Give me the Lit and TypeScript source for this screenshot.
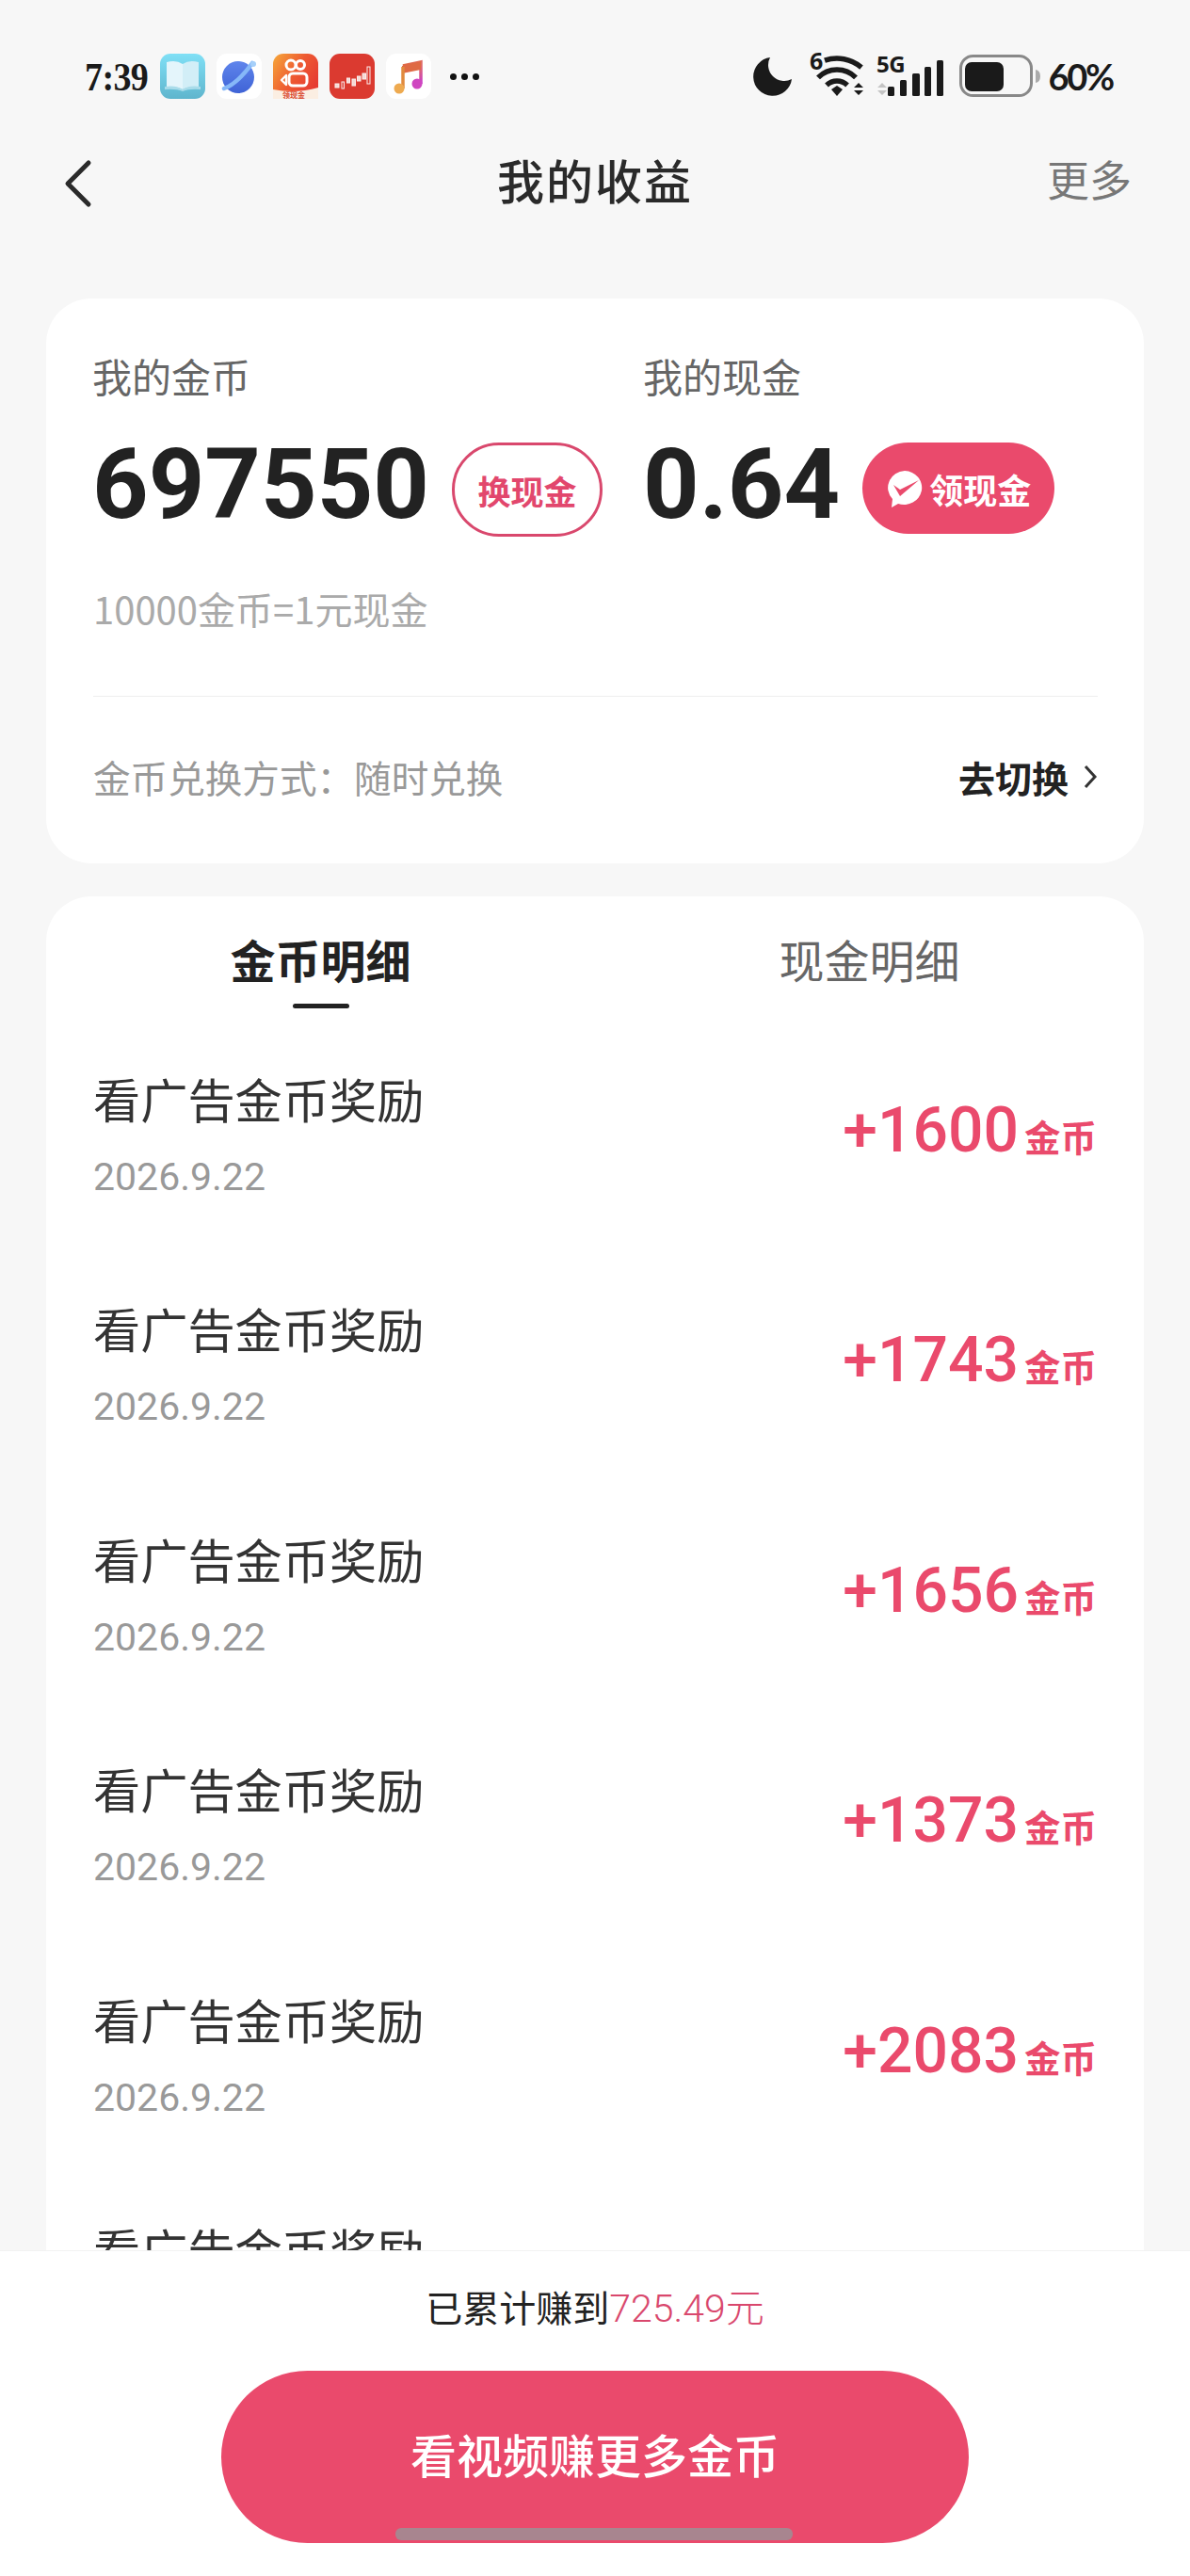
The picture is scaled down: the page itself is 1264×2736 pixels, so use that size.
import { LitElement, html, css, svg } from "lit";
import { customElement } from "lit/decorators.js";

const rows = ["+1600", "+1743", "+1656", "+1373", "+2083", "+1500"];

@customElement("app-root")
export class AppRoot extends LitElement {
  static styles = css`
    :host {
      display: block;
      position: relative;
      width: 1264px;
      height: 2736px;
      overflow: hidden;
      background: #f7f7f7;
      font-family: "Noto Sans CJK SC", "Noto Sans", sans-serif;
      color: #222;
    }
    .status {
      height: 140px;
      box-sizing: border-box;
      padding: 57px 82px 0 90px;
      display: flex;
      justify-content: space-between;
      align-items: flex-start;
    }
    .left, .right { display: flex; align-items: center; height: 48px; }
    .time {
      font: 700 38px/48px "Liberation Serif", serif;
      color: #1a1a1a;
      width: 80px;
      letter-spacing: -0.6px;
      transform: scaleY(1.12);
    }
    .apps { display: flex; gap: 12px; }
    .app { width: 48px; height: 48px; display: block; }
    .dots { display: flex; gap: 5px; margin-left: 20px; }
    .dots i { width: 7px; height: 7px; border-radius: 50%; background: #111; }
    .moon { width: 42px; height: 42px; margin-right: 16px; }
    .wifi { width: 60px; height: 56px; margin: -10px 11px 0 2px; }
    .signal { width: 74px; height: 56px; margin: -10px 14px 0 0; }
    .battery { width: 88px; height: 46px; margin-right: 6px; }
    .pct {
      font: 700 38px/48px "Lato", sans-serif;
      letter-spacing: -2.2px;
      color: #1a1a1a;
    }
    .nav {
      height: 100px;
      display: grid;
      grid-template-columns: 1fr auto 1fr;
      align-items: center;
      padding: 0 62px 0 66px;
      margin-bottom: 77px;
    }
    .back { width: 32px; height: 52px; display: block; margin-top: 10px; }
    .title { font-size: 50px; line-height: 60px; font-weight: 500; letter-spacing: 2px; color: #2a2a2a; margin-right: 4px; }
    .more { justify-self: end; font-size: 45px; line-height: 60px; color: #777; }
    .card {
      margin: 0 49px;
      background: #fff;
      border-radius: 48px;
    }
    .summary {
      height: 600px;
      box-sizing: border-box;
      padding: 57px 49px 0 50px;
      margin-bottom: 35px;
    }
    .cols { display: grid; grid-template-columns: 585px 1fr; }
    .label { font-size: 42px; line-height: 50px; color: #666; margin-left: -1px; }
    .value-row { display: flex; align-items: center; gap: 24px; margin-top: 41px; height: 100px; }
    .value {
      font: 700 104px/100px "Roboto", sans-serif;
      color: #222;
      margin-left: -1px;
    }
    .btn-outline {
      width: 160px;
      height: 100px;
      margin-top: 10px;
      box-sizing: border-box;
      border: 3px solid #d9486d;
      border-radius: 50px;
      color: #e2476d;
      font-size: 35px;
      font-weight: 700;
      display: flex;
      align-items: center;
      justify-content: center;
    }
    .btn-fill {
      width: 204px;
      height: 97px;
      margin-top: 7px;
      border-radius: 49px;
      background: #ea4a6c;
      color: #fff;
      font-size: 36px;
      font-weight: 700;
      display: flex;
      align-items: center;
      justify-content: center;
      gap: 6px;
    }
    .btn-fill svg { width: 40px; height: 40px; display: block; }
    .rate { font-size: 40px; line-height: 50px; color: #aaa; margin-top: 56px; }
    .divider { height: 1px; background: #eee; margin-top: 68px; }
    .mode { display: flex; justify-content: space-between; align-items: center; margin-top: 60px; height: 50px; }
    .mode-text { font-size: 39.6px; line-height: 50px; color: #999; white-space: nowrap; }
    .switch { display: flex; align-items: center; gap: 15px; font-size: 39px; font-weight: 700; color: #222; }
    .switch svg { width: 16px; height: 28px; display: block; }
    .details { height: 1800px; }
    .tabs { display: grid; grid-template-columns: 1fr 1fr; height: 138px; }
    .tab { position: relative; text-align: center; font-size: 48px; line-height: 60px; padding-top: 36px; color: #666; }
    .tab.on { font-weight: 700; color: #222; }
    .tab.on::after {
      content: "";
      position: absolute;
      left: 50%;
      top: 114px;
      width: 60px;
      height: 5px;
      margin-left: -30px;
      border-radius: 3px;
      background: #222;
    }
    .row {
      height: 244.4px;
      box-sizing: border-box;
      padding: 46px 50px 0;
      display: flex;
      justify-content: space-between;
      align-items: flex-start;
    }
    .row-title { font-size: 50.2px; line-height: 60px; color: #333; }
    .row-date { font: 400 41px/50px "Roboto", sans-serif; color: #999; margin-top: 29px; }
    .amount { display: flex; align-items: baseline; color: #ea4a6c; margin-top: 25px; }
    .amount b { font: 500 66px/80px "Roboto", sans-serif; }
    .amount span { font-size: 38.5px; font-weight: 700; margin-left: 6px; line-height: 60px; }
    .bottom {
      position: absolute;
      left: 0;
      right: 0;
      top: 2390px;
      bottom: 0;
      background: #fff;
      border-top: 1px solid #f2f2f2;
      display: flex;
      flex-direction: column;
      align-items: center;
    }
    .total { margin-top: 33px; font-size: 39px; line-height: 50px; color: #222; white-space: nowrap; }
    .total em { font-style: normal; font-size: 41px; color: #d9486d; font-family: "Roboto", "Noto Sans CJK SC", sans-serif; font-weight: 300; }
    .cta {
      width: 794px;
      height: 183px;
      margin-top: 41px;
      box-sizing: border-box;
      padding-bottom: 8px;
      border-radius: 92px;
      background: #ea4a6c;
      color: #fff;
      font-size: 49px;
      font-weight: 500;
      display: flex;
      align-items: center;
      justify-content: center;
    }
    .home {
      position: absolute;
      left: 420px;
      top: 2685px;
      width: 422px;
      height: 13px;
      border-radius: 6px;
      background: #a8858f;
    }
  `;

  private apps() {
    return html`
      <svg class="app" viewBox="0 0 48 48">
        <defs>
          <linearGradient id="bk" x1="0" y1="0" x2="0" y2="1">
            <stop offset="0" stop-color="#80e0f6" /><stop offset="1" stop-color="#5fb5cd" />
          </linearGradient>
          <linearGradient id="gl" x1="0" y1="0" x2="0" y2="1">
            <stop offset="0" stop-color="#5f85ec" /><stop offset="1" stop-color="#3f63d6" />
          </linearGradient>
          <linearGradient id="ks" x1="0" y1="0" x2="1" y2="0.6">
            <stop offset="0" stop-color="#f6a93a" /><stop offset="0.55" stop-color="#ee5a32" /><stop offset="1" stop-color="#e63b32" />
          </linearGradient>
          <linearGradient id="mu" x1="0" y1="0" x2="1" y2="1">
            <stop offset="0" stop-color="#e0683f" /><stop offset="0.6" stop-color="#e06a6a" /><stop offset="1" stop-color="#c83ccb" />
          </linearGradient>
        </defs>
        <rect width="48" height="48" rx="11" fill="url(#bk)" />
        <path d="M7 9 Q17 6 24 11 V38 Q17 34 7 36Z" fill="#e4f5fb" />
        <path d="M41 9 Q31 6 24 11 V38 Q31 34 41 36Z" fill="#d2eef7" />
        <path d="M5 35 Q17 33 24 38 Q31 33 43 35 V38 Q31 37 24 40 Q17 37 5 38Z" fill="#a9dcea" />
      </svg>
      <svg class="app" viewBox="0 0 48 48">
        <rect width="48" height="48" rx="11" fill="#fff" />
        <circle cx="23" cy="25" r="17" fill="url(#gl)" />
        <path d="M8 37 Q22 32 38 10" fill="none" stroke="#86b8f8" stroke-width="4.5" stroke-linecap="round" />
        <circle cx="39" cy="11" r="3" fill="#a6d0fa" />
      </svg>
      <svg class="app" viewBox="0 0 48 48">
        <rect width="48" height="48" rx="11" fill="url(#ks)" />
        <circle cx="19" cy="12" r="5" fill="none" stroke="#fff" stroke-width="3" />
        <circle cx="29" cy="12" r="4.5" fill="none" stroke="#fff" stroke-width="3" />
        <rect x="17" y="21" width="19" height="13" rx="4" fill="none" stroke="#fff" stroke-width="3" />
        <path d="M14 23 L9 28 L14 33Z" fill="none" stroke="#fff" stroke-width="2.4" stroke-linejoin="round" />
        <path d="M0 38 Q24 43 48 36 V48 H0Z" fill="#fbeee2" />
        <text x="22" y="46.5" font-size="8" font-weight="700" fill="#d9482e" text-anchor="middle" font-family="Noto Sans CJK SC">领现金</text>
      </svg>
      <svg class="app" viewBox="0 0 48 48">
        <rect width="48" height="48" rx="11" fill="#db3a30" />
        <g fill="#f5d9d4" stroke="#fbeeee" stroke-width="1">
          <rect x="6" y="32" width="4" height="4" />
          <rect x="13" y="30" width="2.5" height="7" fill="none" />
          <rect x="18.5" y="26" width="3" height="5" />
          <rect x="24" y="27" width="3.5" height="7" />
          <rect x="29.5" y="24" width="3.5" height="5" />
          <rect x="35" y="21" width="3.5" height="6" />
          <rect x="40" y="14" width="3" height="18" fill="none" />
        </g>
      </svg>
      <svg class="app" viewBox="0 0 48 48">
        <rect width="48" height="48" rx="11" fill="#fff" />
        <path d="M18 13 L37 9 V32" fill="none" stroke="url(#mu)" stroke-width="3.5" />
        <path d="M17 13 L37 8 V17 L17 21Z" fill="#df6a44" />
        <path d="M18 14 V37" stroke="#e08a3e" stroke-width="3.5" />
        <circle cx="14" cy="37" r="5.5" fill="#eeaa50" />
        <circle cx="33" cy="32" r="5.5" fill="#cf45c0" />
      </svg>`;
  }

  private statusRight() {
    return html`
      <svg class="moon" viewBox="0 0 42 42">
        <path d="M18 1 A20.5 20.5 0 1 0 41 24 A17 17 0 0 1 18 1Z" fill="#1a1a1a" />
      </svg>
      <svg class="wifi" viewBox="0 -10 60 56">
        <text x="0" y="16" font-size="25" font-weight="700" font-family="Noto Sans" fill="#1a1a1a">6</text>
        <g fill="none" stroke="#1a1a1a" stroke-width="5.5">
          <path d="M16 6.2 A40 40 0 0 1 55 13.6" />
          <path d="M9 24.4 A28 28 0 0 1 49 24.4" />
          <path d="M18 32.4 A16 16 0 0 1 40 32.4" />
        </g>
        <path d="M23 37 L29 33 L35 37 L29 44Z" fill="#1a1a1a" />
        <path d="M47 35 L52 30 L57 35Z M47 38 L57 38 L52 43Z" fill="#1a1a1a" />
      </svg>
      <svg class="signal" viewBox="0 -10 74 56">
        <text x="0" y="19" font-size="24" font-weight="700" font-family="Noto Sans" fill="#1a1a1a" letter-spacing="-0.6">5G</text>
        <path d="M1 35 L6 30 L11 35Z M1 38 L11 38 L6 43Z" fill="#c4c4c4" />
        ${[[12, 34, 7], [25, 27, 7], [38, 20, 8], [51, 13, 7], [64, 6, 7]].map(
          ([x, y, w]) => svg`<rect x=${x} y=${y} width=${w} height=${44 - y} rx="1.5" fill="#1a1a1a" />`
        )}
      </svg>
      <svg class="battery" viewBox="0 0 88 46">
        <rect x="1.5" y="1.5" width="75" height="42" rx="13" fill="none" stroke="#888" stroke-width="3" />
        <rect x="6" y="8" width="41" height="31" rx="7" fill="#1a1a1a" />
        <path d="M81 16 Q86 17 86 23 Q86 29 81 30Z" fill="#aaa" />
      </svg>
      <span class="pct">60%</span>`;
  }

  render() {
    return html`
      <div class="status">
        <div class="left">
          <span class="time">7:39</span>
          <div class="apps">${this.apps()}</div>
          <div class="dots"><i></i><i></i><i></i></div>
        </div>
        <div class="right">${this.statusRight()}</div>
      </div>
      <div class="nav">
        <svg class="back" viewBox="0 0 32 52">
          <path d="M28 4 L6 26 L28 48" fill="none" stroke="#2a2a2a" stroke-width="5" stroke-linecap="round" stroke-linejoin="round" />
        </svg>
        <div class="title">我的收益</div>
        <div class="more">更多</div>
      </div>
      <div class="card summary">
        <div class="cols">
          <div>
            <div class="label">我的金币</div>
            <div class="value-row"><span class="value">697550</span><span class="btn-outline">换现金</span></div>
          </div>
          <div>
            <div class="label">我的现金</div>
            <div class="value-row"><span class="value">0.64</span><span class="btn-fill">
              <svg viewBox="0 0 40 40">
                <path d="M20 1 A19 18 0 1 1 13 36 L6 40 L7 31 A19 18 0 0 1 20 1Z" fill="#fff" />
                <path d="M8 16 L15 21 L35 11 L15 28Z" fill="#ea4a6c" />
              </svg>领现金</span></div>
          </div>
        </div>
        <div class="rate">10000金币=1元现金</div>
        <div class="divider"></div>
        <div class="mode">
          <span class="mode-text">金币兑换方式：随时兑换</span>
          <span class="switch">去切换
            <svg viewBox="0 0 16 28"><path d="M3 3 L13 14 L3 25" fill="none" stroke="#333" stroke-width="3" /></svg>
          </span>
        </div>
      </div>
      <div class="card details">
        <div class="tabs">
          <div class="tab on">金币明细</div>
          <div class="tab">现金明细</div>
        </div>
        ${rows.map(
          (r) => html`<div class="row">
            <div>
              <div class="row-title">看广告金币奖励</div>
              <div class="row-date">2026.9.22</div>
            </div>
            <div class="amount"><b>${r}</b><span>金币</span></div>
          </div>`
        )}
      </div>
      <div class="bottom">
        <div class="total">已累计赚到<em>725.49元</em></div>
        <div class="cta">看视频赚更多金币</div>
      </div>
      <div class="home"></div>
    `;
  }
}
